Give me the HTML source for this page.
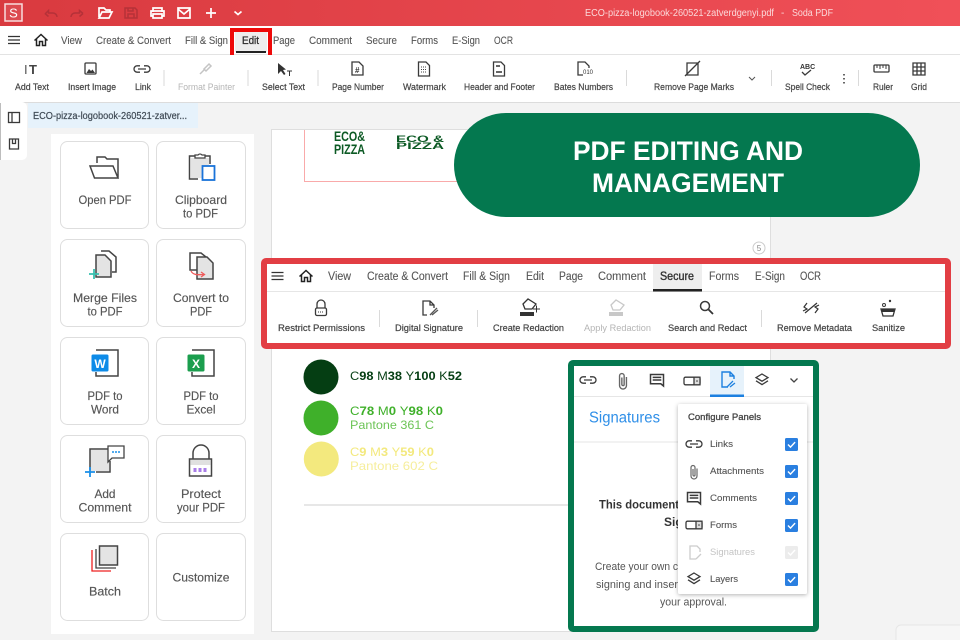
<!DOCTYPE html>
<html><head><meta charset="utf-8"><title>PDF Editing and Management</title>
<style>
html,body{margin:0;padding:0;width:960px;height:640px;overflow:hidden;background:#f3f3f3}
svg{display:block}
text{font-family:"Liberation Sans",sans-serif;fill:#4a4a4a}
.m{font-size:11px;fill:#555;stroke:#555;stroke-width:.1px}
.x{font-size:11.5px;fill:#555;stroke:#555;stroke-width:.1px}
.l{font-size:9.5px;fill:#444;stroke:#444;stroke-width:.2px}
.g{fill:#b5b5b5;stroke:none}
.t{font-size:12px;fill:#555;stroke:#555;stroke-width:.15px;text-anchor:middle}
.p{font-size:9.5px;fill:#555;stroke:#555;stroke-width:.12px}
.s{fill:none;stroke:#3a3a3a;stroke-width:1.3}
.w{fill:none;stroke:#fff;stroke-width:1.7}
.d{fill:none;stroke:#b53138;stroke-width:1.5}
.c{font-size:12px;font-weight:bold}
.n{font-weight:normal}
</style></head><body>
<svg width="960" height="640" viewBox="0 0 960 640" xmlns="http://www.w3.org/2000/svg">
<defs>
<linearGradient id="tb" x1="0" x2="1" y1="0" y2="0"><stop offset="0" stop-color="#d93a3f"/><stop offset="1" stop-color="#f05058"/></linearGradient>
<g id="ham"><path d="M-6 -3.500H6M-6 0H6M-6 3.500H6" fill="none" stroke="#333" stroke-width="1.200"/></g>
<g id="home"><path d="M-6.500 .5L0 -5.500L6.500 .5M-4.500 -1V5.500H-1.500V1.500H1.500V5.500H4.500V-1" fill="none" stroke="#222" stroke-width="1.500"/></g>
<g id="link"><path d="M-2 -3.200H-4.800a3.200 3.200 0 0 0 0 6.400H-2M2 -3.200H4.800a3.200 3.200 0 0 1 0 6.400H2M-4 0H4" class="s"/></g>
<g id="clip"><path d="M3 -3.500V4a3 3 0 0 1-6 0V-4.500a2 2 0 0 1 4 0V3a1 1 0 0 1-2 0V-3" fill="none" stroke="#666" stroke-width="1.200"/></g>
<g id="cmt"><path d="M-6.500 -5.500H6.500V6L3.800 3.800H-6.500ZM-4.300 -2.600H4.300M-4.300 0H4.300" class="s" style="stroke-width:1.500"/></g>
<g id="form"><rect x="-8" y="-3.800" width="16" height="7.600" rx="1.500" class="s"/><rect x="2" y="-3.800" width="6" height="7.600" fill="#ddd" stroke="#3a3a3a" stroke-width="1.300"/><circle cx="5" r=".8" fill="#3a3a3a"/></g>
<g id="lay"><path d="M0 -6L6 -2.400L0 1.200L-6 -2.400ZM-6 .8L0 4.600L6 .8" class="s"/></g>
<g id="chk"><rect x="-6.500" y="-6.500" width="13" height="13" rx="1.500" fill="#2a7fe0"/><path d="M-3.500 0L-1 2.600L3.600 -2.400" fill="none" stroke="#fff" stroke-width="1.400"/></g>
<g id="doc"><path d="M-5.500 -7H2L5.500 -3.500V7H-5.500Z" class="s"/></g>
</defs>

<!-- title bar -->
<rect width="960" height="26" fill="url(#tb)"/>
<rect x="5" y="4" width="17" height="17" fill="#dc4a50" stroke="#f8dcdd" stroke-width="1.500"/>
<text x="13.500" y="17.500" font-size="13" text-anchor="middle" style="fill:#ffffff">S</text>
<path class="d" d="M45 14L48.500 10.500V13H53a4 4 0 0 1 4 4M45 13.500L48.500 16.500"/>
<path class="d" d="M83 13.500L79.500 10.500V13H75a4 4 0 0 0-4 4M83 13.500L79.500 16.500"/>
<path class="w" d="M99 17V8H104L106 10H110V12M99 18L102 12H112L109 18Z"/>
<path class="d" d="M125 8H135L137 10V18H125ZM128 8V11H133V8M128 18V14H134V18"/>
<path class="w" d="M153 12V8H162V12M153 16H151V11H164V16H162M153 14H162V18H153Z"/>
<path class="w" d="M178 8H190V18H178ZM178 9L184 14L190 9"/>
<path class="w" d="M211 8V18M206 13H216"/>
<path class="w" d="M234.500 11.500L238 14.500L241.500 11.500"/>
<text x="585" y="16" font-size="10" textLength="189" lengthAdjust="spacingAndGlyphs" style="fill:#fbd9da">ECO-pizza-logobook-260521-zatverdgenyi.pdf</text>
<text x="781" y="16" font-size="10" style="fill:#fbd9da">-</text>
<text x="792" y="16" font-size="10" textLength="41" lengthAdjust="spacingAndGlyphs" style="fill:#fbd9da">Soda PDF</text>

<!-- menu -->
<rect y="26" width="960" height="28" fill="#fff"/>
<rect y="54" width="960" height="1" fill="#e3e3e3"/>
<use href="#ham" x="14" y="40"/><use href="#home" x="41" y="40"/>
<rect x="235" y="29" width="32" height="23" fill="#eeeeee"/>
<rect x="236" y="51" width="30" height="2" fill="#222"/>
<text class="m" x="61" y="44" textLength="21" lengthAdjust="spacingAndGlyphs">View</text>
<text class="m" x="96" y="44" textLength="75" lengthAdjust="spacingAndGlyphs">Create &amp; Convert</text>
<text class="m" x="185" y="44" textLength="43" lengthAdjust="spacingAndGlyphs">Fill &amp; Sign</text>
<text class="m" x="242" y="44" textLength="17" lengthAdjust="spacingAndGlyphs" style="fill:#333;stroke:#333;stroke-width:.35px">Edit</text>
<text class="m" x="273" y="44" textLength="22" lengthAdjust="spacingAndGlyphs">Page</text>
<text class="m" x="309" y="44" textLength="43" lengthAdjust="spacingAndGlyphs">Comment</text>
<text class="m" x="366" y="44" textLength="31" lengthAdjust="spacingAndGlyphs">Secure</text>
<text class="m" x="411" y="44" textLength="27" lengthAdjust="spacingAndGlyphs">Forms</text>
<text class="m" x="452" y="44" textLength="28" lengthAdjust="spacingAndGlyphs">E-Sign</text>
<text class="m" x="494" y="44" textLength="19" lengthAdjust="spacingAndGlyphs">OCR</text>
<rect x="232" y="30" width="38" height="27" fill="none" stroke="#ee0a0a" stroke-width="4"/>

<!-- toolbar -->
<rect y="55" width="960" height="47" fill="#fff"/>
<rect y="102" width="960" height="1" fill="#dcdcdc"/>
<text x="24" y="74" font-size="13" style="fill:#555">I</text><text x="29" y="74" font-size="13" font-weight="bold" style="fill:#444">T</text>
<rect x="85" y="63" width="11" height="11" rx="1" class="s"/><path d="M86.500 73L89 69L91 71L92.500 69.500L95 73Z" fill="#3a3a3a"/>
<use href="#link" x="142" y="69"/>
<path d="M200 74L204 70M204 69L209 64L211 66L206 71Z" fill="none" stroke="#c4c4c4" stroke-width="1.500"/>
<path d="M278 63L278 74L281 71L284 75L285.500 74L283 70L286 69.500Z" fill="#333"/><path d="M287 71H292M289.500 71V76" stroke="#333" fill="none"/>
<path d="M352 62H359L363 66V75H352Z" class="s"/><text x="355" y="73" font-size="8" font-weight="bold" style="fill:#333">#</text>
<use href="#doc" x="424" y="69"/><path d="M421 67H427M421 69.500H427M421 72H427" stroke="#444" stroke-dasharray="1 1" fill="none"/>
<use href="#doc" x="499" y="69"/><path d="M496 66H500M496 72H502" stroke="#333" stroke-width="1.500" fill="none"/>
<path d="M583 75H578V62H585L589 66V68" class="s"/><text x="583" y="74" font-size="6" style="fill:#333">010</text>
<path d="M687 63H698V75H687ZM685 76L700 61" class="s"/>
<text x="800" y="69" font-size="7" font-weight="bold" style="fill:#333">ABC</text><path d="M802 72L805 75L811 70" class="s"/>
<rect x="874" y="65" width="15" height="7" rx="1" class="s"/><path d="M877 65V68M880 65V69M883 65V68M886 65V69" stroke="#3a3a3a" fill="none"/>
<path d="M913 63H925V75H913ZM917 63V75M921 63V75M913 67H925M913 71H925" class="s"/>
<path d="M749 77L752 80L755 77" fill="none" stroke="#555"/>
<path d="M844 74V75.500M844 78V79.500M844 82V83.500" stroke="#333" stroke-width="1.500" fill="none"/>
<g fill="#dadada"><rect x="163.500" y="70" width="1" height="16"/><rect x="247.500" y="70" width="1" height="16"/><rect x="317.500" y="70" width="1" height="16"/><rect x="626" y="70" width="1" height="16"/><rect x="771" y="70" width="1" height="16"/><rect x="858" y="70" width="1" height="16"/></g>
<text class="l" x="15" y="90" textLength="34" lengthAdjust="spacingAndGlyphs">Add Text</text>
<text class="l" x="68" y="90" textLength="48" lengthAdjust="spacingAndGlyphs">Insert Image</text>
<text class="l" x="135" y="90" textLength="16" lengthAdjust="spacingAndGlyphs">Link</text>
<text class="l g" x="178" y="90" textLength="57" lengthAdjust="spacingAndGlyphs">Format Painter</text>
<text class="l" x="262" y="90" textLength="43" lengthAdjust="spacingAndGlyphs">Select Text</text>
<text class="l" x="332" y="90" textLength="52" lengthAdjust="spacingAndGlyphs">Page Number</text>
<text class="l" x="403" y="90" textLength="43" lengthAdjust="spacingAndGlyphs">Watermark</text>
<text class="l" x="464" y="90" textLength="71" lengthAdjust="spacingAndGlyphs">Header and Footer</text>
<text class="l" x="554" y="90" textLength="59" lengthAdjust="spacingAndGlyphs">Bates Numbers</text>
<text class="l" x="654" y="90" textLength="80" lengthAdjust="spacingAndGlyphs">Remove Page Marks</text>
<text class="l" x="785" y="90" textLength="45" lengthAdjust="spacingAndGlyphs">Spell Check</text>
<text class="l" x="873" y="90" textLength="20" lengthAdjust="spacingAndGlyphs">Ruler</text>
<text class="l" x="911" y="90" textLength="16" lengthAdjust="spacingAndGlyphs">Grid</text>

<!-- tab row -->
<rect y="103" width="960" height="537" fill="#f3f3f3"/>
<rect x="28" y="103" width="170" height="25" fill="#e6f2fb"/>
<text x="33" y="119" font-size="10" textLength="154" lengthAdjust="spacingAndGlyphs" style="fill:#3f4a55;stroke:#3f4a55;stroke-width:.2px">ECO-pizza-logobook-260521-zatver...</text>
<rect x="-6" y="102" width="33" height="58" rx="5" fill="#fff"/>
<rect x="0" y="103" width="1" height="57" fill="#bdbdbd"/>
<rect x="8.500" y="112.500" width="11" height="10" class="s"/><path d="M12 112.500V122.500" class="s"/>
<path d="M9.500 139H18.500V149H9.500ZM12.500 139V143.500H15.500V139" class="s"/>

<!-- sidebar -->
<rect x="51" y="134" width="203" height="500" fill="#fff"/>
<g fill="#fff" stroke="#dedede" stroke-width="1">
<rect x="60.500" y="141.500" width="88" height="87" rx="7"/><rect x="156.500" y="141.500" width="89" height="87" rx="7"/>
<rect x="60.500" y="239.500" width="88" height="87" rx="7"/><rect x="156.500" y="239.500" width="89" height="87" rx="7"/>
<rect x="60.500" y="337.500" width="88" height="87" rx="7"/><rect x="156.500" y="337.500" width="89" height="87" rx="7"/>
<rect x="60.500" y="435.500" width="88" height="87" rx="7"/><rect x="156.500" y="435.500" width="89" height="87" rx="7"/>
<rect x="60.500" y="533.500" width="88" height="87" rx="7"/><rect x="156.500" y="533.500" width="89" height="87" rx="7"/>
</g>
<!-- tile icons -->
<path d="M97 163V157H105L107 159H118V178M90 166H113L118 178H94.500Z" fill="none" stroke="#444" stroke-width="1.500"/>
<path d="M198 179H189.500V156H195M205 156H210V164" fill="none" stroke="#444" stroke-width="1.500"/><rect x="191" y="158" width="18" height="20" fill="#e4e4e4"/><path d="M195 158V155H198a2.500 2.500 0 0 1 4 0H205V158Z" fill="#fff" stroke="#444" stroke-width="1.300"/><rect x="202.500" y="166" width="12" height="14" fill="#fff" stroke="#1a73d9" stroke-width="1.800"/>
<path d="M101 251H109L116 257V272H112" fill="none" stroke="#444" stroke-width="1.500"/><path d="M96 255H105L111 261V277H96Z" fill="#e4e4e4" stroke="#444" stroke-width="1.500"/><path d="M89 274H99M94 269V279" stroke="#38c0b0" stroke-width="1.800" fill="none"/>
<path d="M197 270H190V253H201L206 257" fill="none" stroke="#444" stroke-width="1.500"/><path d="M197 257H207L213 263V279H197Z" fill="#e4e4e4" stroke="#444" stroke-width="1.500"/><path d="M191 271C193 275 197 275 204 274.500M201 272L204.500 274.500L201 277" fill="none" stroke="#ee5a5a" stroke-width="1.300"/>
<path d="M96 350H118V376H96V372" fill="none" stroke="#444" stroke-width="1.500"/><rect x="91.500" y="354.500" width="17" height="17" rx="1.500" fill="#0d8be8"/><text x="100" y="368" font-size="12" font-weight="bold" text-anchor="middle" style="fill:#fff">W</text>
<path d="M192 350H214V376H192V372" fill="none" stroke="#444" stroke-width="1.500"/><rect x="187.500" y="354.500" width="17" height="17" rx="1.500" fill="#1b9e4e"/><text x="196" y="368" font-size="12" font-weight="bold" text-anchor="middle" style="fill:#fff">X</text>
<rect x="90" y="450" width="19" height="21" fill="#e4e4e4"/><path d="M96 472H110V461M109 449H90V470" fill="none" stroke="#444" stroke-width="1.500"/><path d="M108 446H124V458H112L108 462Z" fill="#fff" stroke="#444" stroke-width="1.300"/><path d="M112 452H120" stroke="#1a8fe8" stroke-width="1.500" stroke-dasharray="2 1" fill="none"/><path d="M85 472H95M90 467V477" stroke="#1a8fe8" stroke-width="1.800" fill="none"/>
<path d="M193 460V453a8 8 0 0 1 16 0V460" fill="none" stroke="#444" stroke-width="1.500"/><rect x="189.500" y="459" width="22" height="17" fill="#fff" stroke="#444" stroke-width="1.500"/><rect x="190.500" y="460" width="20" height="5" fill="#e0e0e0"/><path d="M193.500 470H207.500" stroke="#a97ee8" stroke-width="4" stroke-dasharray="3 2" fill="none"/>
<path d="M92 550V571H111" fill="none" stroke="#ee2020" stroke-width="1.300"/><path d="M96 549V568H116" fill="none" stroke="#444" stroke-width="1.300"/><rect x="99.500" y="546" width="18" height="19" fill="#e4e4e4" stroke="#444" stroke-width="1.500"/>
<!-- tile labels -->
<text class="t" x="105" y="204" textLength="53" lengthAdjust="spacingAndGlyphs">Open PDF</text>
<text class="t" x="201" y="204" textLength="52" lengthAdjust="spacingAndGlyphs">Clipboard</text><text class="t" x="200.500" y="217.500" textLength="35" lengthAdjust="spacingAndGlyphs">to PDF</text>
<text class="t" x="105" y="302" textLength="64" lengthAdjust="spacingAndGlyphs">Merge Files</text><text class="t" x="105" y="315.500" textLength="35" lengthAdjust="spacingAndGlyphs">to PDF</text>
<text class="t" x="201" y="302" textLength="56" lengthAdjust="spacingAndGlyphs">Convert to</text><text class="t" x="201" y="315.500" textLength="22" lengthAdjust="spacingAndGlyphs">PDF</text>
<text class="t" x="105" y="400" textLength="35" lengthAdjust="spacingAndGlyphs">PDF to</text><text class="t" x="105" y="413.500" textLength="28" lengthAdjust="spacingAndGlyphs">Word</text>
<text class="t" x="201" y="400" textLength="35" lengthAdjust="spacingAndGlyphs">PDF to</text><text class="t" x="201" y="413.500" textLength="29" lengthAdjust="spacingAndGlyphs">Excel</text>
<text class="t" x="105" y="498" textLength="21" lengthAdjust="spacingAndGlyphs">Add</text><text class="t" x="105" y="511.500" textLength="53" lengthAdjust="spacingAndGlyphs">Comment</text>
<text class="t" x="201" y="498" textLength="40" lengthAdjust="spacingAndGlyphs">Protect</text><text class="t" x="201" y="511.500" textLength="48" lengthAdjust="spacingAndGlyphs">your PDF</text>
<text class="t" x="105" y="595.500" textLength="32" lengthAdjust="spacingAndGlyphs">Batch</text>
<text class="t" x="201" y="581.500" textLength="57" lengthAdjust="spacingAndGlyphs">Customize</text>

<!-- page -->
<rect x="271.500" y="129.500" width="499" height="502" fill="#fff" stroke="#dedede" stroke-width="1"/>
<path d="M304.500 130V181.500H770" fill="none" stroke="#f9aaaa" stroke-width="1"/>
<text x="334" y="141" font-size="14" font-weight="bold" textLength="31" lengthAdjust="spacingAndGlyphs" style="fill:#0c5a24">ECO&amp;</text>
<text x="334" y="154" font-size="14" font-weight="bold" textLength="31" lengthAdjust="spacingAndGlyphs" style="fill:#0c5a24">PIZZA</text>
<text x="396" y="142" font-size="9" font-weight="bold" textLength="48" lengthAdjust="spacingAndGlyphs" style="fill:#0c5a24">ECO &amp;</text>
<text x="396" y="149" font-size="9" font-weight="bold" textLength="48" lengthAdjust="spacingAndGlyphs" style="fill:#0c5a24">PIZZA</text>
<circle cx="759" cy="248" r="6" fill="#fff" stroke="#ccc"/><text x="759" y="251" font-size="8" text-anchor="middle" style="fill:#888">5</text>

<!-- color swatches -->
<circle cx="321" cy="377" r="17.500" fill="#053e13"/>
<circle cx="321" cy="418" r="17.500" fill="#3fb02a"/>
<circle cx="321.300" cy="459" r="17.500" fill="#f3e97e"/>
<text class="c" x="350" y="380" textLength="112" lengthAdjust="spacingAndGlyphs" style="fill:#053e13"><tspan class="n">C</tspan>98 <tspan class="n">M</tspan>38 <tspan class="n">Y</tspan>100 <tspan class="n">K</tspan>52</text>
<text class="c" x="350" y="415" textLength="93" lengthAdjust="spacingAndGlyphs" style="fill:#3fb02a"><tspan class="n">C</tspan>78 <tspan class="n">M</tspan>0 <tspan class="n">Y</tspan>98 <tspan class="n">K</tspan>0</text>
<text x="350" y="429" font-size="12" textLength="84" lengthAdjust="spacingAndGlyphs" style="fill:#6cc456">Pantone 361 C</text>
<text class="c" x="350" y="456" textLength="84" lengthAdjust="spacingAndGlyphs" style="fill:#f3e97e"><tspan class="n">C</tspan>9 <tspan class="n">M</tspan>3 <tspan class="n">Y</tspan>59 <tspan class="n">K</tspan>0</text>
<text x="350" y="470" font-size="12" textLength="88" lengthAdjust="spacingAndGlyphs" style="fill:#f6ee9c">Pantone 602 C</text>
<rect x="304" y="504.500" width="266" height="1" fill="#cfcfcf"/>

<!-- green pill -->
<rect x="454" y="113" width="466" height="104" rx="52" fill="#04784f"/>
<text x="688" y="160" font-size="27" font-weight="bold" text-anchor="middle" textLength="230" lengthAdjust="spacingAndGlyphs" style="fill:#fff">PDF EDITING AND</text>
<text x="688" y="192" font-size="27" font-weight="bold" text-anchor="middle" textLength="192" lengthAdjust="spacingAndGlyphs" style="fill:#fff">MANAGEMENT</text>

<!-- secure ribbon -->
<rect x="264" y="261" width="684" height="85" rx="2" fill="#fff" stroke="#e23e44" stroke-width="6"/>
<rect x="267" y="291" width="678" height="1" fill="#e6e6e6"/>
<rect x="653" y="264" width="49" height="26" fill="#eeeeee"/><rect x="653" y="289" width="49" height="2.500" fill="#222"/>
<use href="#ham" x="277.500" y="276"/><use href="#home" x="306" y="276"/>
<text class="x" x="328" y="280" textLength="23" lengthAdjust="spacingAndGlyphs">View</text>
<text class="x" x="367" y="280" textLength="81" lengthAdjust="spacingAndGlyphs">Create &amp; Convert</text>
<text class="x" x="463" y="280" textLength="47" lengthAdjust="spacingAndGlyphs">Fill &amp; Sign</text>
<text class="x" x="526" y="280" textLength="18" lengthAdjust="spacingAndGlyphs">Edit</text>
<text class="x" x="559" y="280" textLength="24" lengthAdjust="spacingAndGlyphs">Page</text>
<text class="x" x="598" y="280" textLength="48" lengthAdjust="spacingAndGlyphs">Comment</text>
<text class="x" x="660" y="280" textLength="34" lengthAdjust="spacingAndGlyphs" style="fill:#333;stroke:#333;stroke-width:.35px">Secure</text>
<text class="x" x="709" y="280" textLength="30" lengthAdjust="spacingAndGlyphs">Forms</text>
<text class="x" x="755" y="280" textLength="30" lengthAdjust="spacingAndGlyphs">E-Sign</text>
<text class="x" x="800" y="280" textLength="21" lengthAdjust="spacingAndGlyphs">OCR</text>
<path d="M317 308V304a4 4 0 0 1 8 0V308" class="s"/><rect x="315.500" y="308" width="11" height="7.500" rx="1.500" class="s"/><path d="M318 312H324" stroke="#333" stroke-dasharray="1 1" fill="none"/>
<path d="M427 315H423V301H430L434 305V308M430 301V305H434" class="s"/><path d="M430 315L437 308M432 315L438 310" stroke="#555" stroke-width="1.300" fill="none"/>
<path d="M523 304L528 299L536 304L532 309H525Z" fill="none" stroke="#333" stroke-width="1.300"/><rect x="520" y="312" width="14" height="4" fill="#333"/><path d="M533 309H540M536.500 305.500V312.500" stroke="#333" fill="none"/>
<path d="M611 305L616 300L624 305L620 310H613Z" fill="none" stroke="#c8c8c8" stroke-width="1.300"/><rect x="609" y="312" width="14" height="4" fill="#c8c8c8"/>
<circle cx="705" cy="306" r="4.500" class="s" style="stroke-width:1.500"/><path d="M708.500 309.500L713 314" stroke="#333" stroke-width="1.800" fill="none"/>
<path d="M805 313L817 303M807 303L804 307L807 309L803 311M815 313L818 309L815 307L819 305" fill="none" stroke="#333" stroke-width="1.200"/>
<path d="M881 309H895L893 316H883Z" fill="none" stroke="#333" stroke-width="1.300"/><rect x="882" y="309" width="12" height="3" fill="#333"/><circle cx="884" cy="305" r="1.500" class="s" style="stroke-width:1"/><circle cx="890" cy="301" r="1.200" fill="#333"/>
<g fill="#dadada"><rect x="379" y="310" width="1" height="17"/><rect x="477" y="310" width="1" height="17"/><rect x="761" y="310" width="1" height="17"/></g>
<text class="l" x="278" y="331" textLength="87" lengthAdjust="spacingAndGlyphs">Restrict Permissions</text>
<text class="l" x="395" y="331" textLength="68" lengthAdjust="spacingAndGlyphs">Digital Signature</text>
<text class="l" x="493" y="331" textLength="71" lengthAdjust="spacingAndGlyphs">Create Redaction</text>
<text class="l g" x="584" y="331" textLength="67" lengthAdjust="spacingAndGlyphs">Apply Redaction</text>
<text class="l" x="668" y="331" textLength="79" lengthAdjust="spacingAndGlyphs">Search and Redact</text>
<text class="l" x="777" y="331" textLength="75" lengthAdjust="spacingAndGlyphs">Remove Metadata</text>
<text class="l" x="872" y="331" textLength="33" lengthAdjust="spacingAndGlyphs">Sanitize</text>

<!-- signatures panel -->
<rect x="571" y="363" width="245" height="266" rx="2" fill="#fff" stroke="#04784f" stroke-width="6"/>
<rect x="574" y="396" width="239" height="1" fill="#e6e6e6"/>
<rect x="710" y="366" width="34" height="29" fill="#e6f2fb"/><rect x="710" y="394.500" width="34" height="2.500" fill="#1c80e0"/>
<use href="#link" x="588" y="380"/>
<g transform="translate(623 381) scale(1.150)"><use href="#clip"/></g>
<use href="#cmt" x="657" y="380"/><use href="#form" x="692" y="381"/>
<path d="M728 387H722V372H730L734 376V379M730 372V376H734" fill="none" stroke="#1c80e0" stroke-width="1.400"/><path d="M727 387L733 381M730 387L735 383" stroke="#1c80e0" stroke-width="1.300" fill="none"/>
<use href="#lay" x="762" y="380"/>
<path d="M790.500 378.500L794 382L797.500 378.500" fill="none" stroke="#444" stroke-width="1.300"/>
<text x="589" y="422.500" font-size="15.500" textLength="71" lengthAdjust="spacingAndGlyphs" style="fill:#2f8fe8">Signatures</text>
<rect x="574" y="441.500" width="239" height="1" fill="#e6e6e6"/>
<text x="599" y="508.500" font-size="12" font-weight="bold" textLength="80" lengthAdjust="spacingAndGlyphs" style="fill:#333">This document</text>
<text x="664" y="526" font-size="12" font-weight="bold" style="fill:#333">Sig</text>
<text x="595" y="570" font-size="11" textLength="83" lengthAdjust="spacingAndGlyphs" style="fill:#555">Create your own c</text>
<text x="596" y="588" font-size="11" textLength="82" lengthAdjust="spacingAndGlyphs" style="fill:#555">signing and inser</text>
<text x="660" y="605.500" font-size="11" textLength="67" lengthAdjust="spacingAndGlyphs" style="fill:#555">your approval.</text>

<filter id="sh" x="-20%" y="-20%" width="140%" height="140%"><feDropShadow dx="0" dy="1" stdDeviation="2" flood-color="#000" flood-opacity=".3"/></filter>
<rect x="678" y="404" width="129" height="190" rx="2" fill="#fff" filter="url(#sh)"/>
<text x="688" y="420" font-size="9.500" textLength="73" lengthAdjust="spacingAndGlyphs" style="fill:#444;stroke:#444;stroke-width:.3px">Configure Panels</text>
<use href="#link" x="694" y="444"/>
<use href="#clip" x="694" y="472"/>
<use href="#cmt" x="694" y="498"/>
<use href="#form" x="694" y="525"/>
<path d="M696 559H690V546H697L700 549V552M696 559L701 554" fill="none" stroke="#ccc" stroke-width="1.300"/>
<use href="#lay" x="694" y="579"/>
<text class="p" x="710" y="447" textLength="23" lengthAdjust="spacingAndGlyphs">Links</text>
<text class="p" x="710" y="474" textLength="54" lengthAdjust="spacingAndGlyphs">Attachments</text>
<text class="p" x="710" y="501" textLength="47" lengthAdjust="spacingAndGlyphs">Comments</text>
<text class="p" x="710" y="528" textLength="27" lengthAdjust="spacingAndGlyphs">Forms</text>
<text class="p" x="710" y="555" textLength="45" lengthAdjust="spacingAndGlyphs" style="fill:#c4c4c4;stroke:none">Signatures</text>
<text class="p" x="710" y="582" textLength="28" lengthAdjust="spacingAndGlyphs">Layers</text>
<use href="#chk" x="791.500" y="444.500"/><use href="#chk" x="791.500" y="471.500"/><use href="#chk" x="791.500" y="498.500"/><use href="#chk" x="791.500" y="525.500"/>
<rect x="785" y="546" width="13" height="13" rx="1.500" fill="#ececec"/><path d="M788 552.500L790.500 555L795 550" fill="none" stroke="#fff" stroke-width="1.400"/>
<use href="#chk" x="791.500" y="579.500"/>

<!-- bottom-right control -->
<rect x="896" y="625" width="80" height="30" rx="5" fill="#f6f6f6" stroke="#e6e6e6"/>
</svg>
</body></html>
